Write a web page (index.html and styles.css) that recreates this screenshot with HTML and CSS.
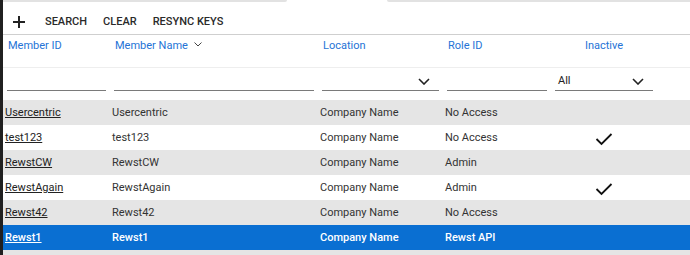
FILE: index.html
```html
<!DOCTYPE html>
<html lang="en">
<head>
    <meta charset="UTF-8">
    <title>Members</title>
    <link rel="stylesheet" href="styles.css">
</head>
<body>
    <div class="app">
        <div class="side"></div>
        <div class="main">
            <div class="tabs">
                <div class="tab-line left"></div>
                <div class="tab-gap"></div>
                <div class="tab-line right"></div>
            </div>

            <div class="toolbar">
                <button class="tool add" title="Add">
                    <svg width="14" height="14" viewBox="0 0 14 14"><path d="M7 1v12M1 7h12" stroke="#222" stroke-width="2" fill="none"/></svg>
                </button>
                <button class="tool">SEARCH</button>
                <button class="tool">CLEAR</button>
                <button class="tool">RESYNC KEYS</button>
            </div>

            <table class="grid">
                <colgroup>
                    <col style="width:107px">
                    <col style="width:208px">
                    <col style="width:125px">
                    <col style="width:108px">
                    <col style="width:106px">
                    <col>
                </colgroup>
                <thead>
                    <tr class="head">
                        <th>Member ID</th>
                        <th>Member Name
                            <svg class="sort" width="8" height="5" viewBox="0 0 8 5"><path d="M0.5 0.5l3.5 3.5 3.5-3.5" stroke="#444" stroke-width="1" fill="none"/></svg>
                        </th>
                        <th>Location</th>
                        <th>Role ID</th>
                        <th class="center">Inactive</th>
                        <th></th>
                    </tr>
                    <tr class="filters">
                        <td><div class="filter"></div></td>
                        <td><div class="filter"></div></td>
                        <td><div class="filter select"><span></span><svg width="12" height="7" viewBox="0 0 12 7"><path d="M1 1l5 5 5-5" stroke="#222" stroke-width="1.6" fill="none"/></svg></div></td>
                        <td><div class="filter"></div></td>
                        <td><div class="filter select"><span>All</span><svg width="12" height="7" viewBox="0 0 12 7"><path d="M1 1l5 5 5-5" stroke="#222" stroke-width="1.6" fill="none"/></svg></div></td>
                        <td></td>
                    </tr>
                </thead>
                <tbody>
                    <tr class="alt">
                        <td><a href="#">Usercentric</a></td>
                        <td>Usercentric</td>
                        <td>Company Name</td>
                        <td>No Access</td>
                        <td class="center"></td>
                        <td></td>
                    </tr>
                    <tr>
                        <td><a href="#">test123</a></td>
                        <td>test123</td>
                        <td>Company Name</td>
                        <td>No Access</td>
                        <td class="center"><svg class="check" width="18" height="14" viewBox="0 0 18 14"><path d="M1.5 7l5 5 10-10" stroke="#111" stroke-width="1.8" fill="none"/></svg></td>
                        <td></td>
                    </tr>
                    <tr class="alt">
                        <td><a href="#">RewstCW</a></td>
                        <td>RewstCW</td>
                        <td>Company Name</td>
                        <td>Admin</td>
                        <td class="center"></td>
                        <td></td>
                    </tr>
                    <tr>
                        <td><a href="#">RewstAgain</a></td>
                        <td>RewstAgain</td>
                        <td>Company Name</td>
                        <td>Admin</td>
                        <td class="center"><svg class="check" width="18" height="14" viewBox="0 0 18 14"><path d="M1.5 7l5 5 10-10" stroke="#111" stroke-width="1.8" fill="none"/></svg></td>
                        <td></td>
                    </tr>
                    <tr class="alt">
                        <td><a href="#">Rewst42</a></td>
                        <td>Rewst42</td>
                        <td>Company Name</td>
                        <td>No Access</td>
                        <td class="center"></td>
                        <td></td>
                    </tr>
                    <tr class="selected">
                        <td><a href="#">Rewst1</a></td>
                        <td>Rewst1</td>
                        <td>Company Name</td>
                        <td>Rewst API</td>
                        <td class="center"></td>
                        <td></td>
                    </tr>
                    <tr class="alt">
                        <td>&nbsp;</td>
                        <td></td>
                        <td></td>
                        <td></td>
                        <td></td>
                        <td></td>
                    </tr>
                </tbody>
            </table>
        </div>
    </div>
</body>
</html>
```

FILE: styles.css
```css
* {
    box-sizing: border-box;
}

html, body {
    margin: 0;
    padding: 0;
    height: 100%;
    overflow: hidden;
}

body {
    font-family: Roboto, "Liberation Sans", Arial, sans-serif;
    font-size: 11px;
    color: #333;
    background: #fff;
}

.app {
    display: flex;
    min-height: 100%;
}

.side {
    width: 3px;
    flex: none;
    background: #202020;
}

.main {
    flex: 1;
    min-width: 0;
}

/* tab strip at the very top */
.tabs {
    display: flex;
    height: 2px;
}

.tab-line {
    background: #e2e2e2;
}

.tab-line.left {
    width: 284px;
    border-bottom-right-radius: 2px;
}

.tab-gap {
    width: 100px;
}

.tab-line.right {
    flex: 1;
    border-bottom-left-radius: 2px;
}

.toolbar {
    display: flex;
    align-items: center;
    height: 33px;
    padding: 7px 0 0 9px;
    border-bottom: 1px solid #cfcfcf;
}

.tool {
    background: none;
    border: none;
    padding: 0;
    margin-right: 16px;
    font-family: inherit;
    font-size: 11px;
    font-weight: 500;
    color: #2a2a2a;
    cursor: pointer;
}

.tool.add {
    display: flex;
    margin-right: 19px;
    margin-top: 0;
}

.tool:last-child {
    margin-right: 0;
}

table.grid {
    width: 100%;
    border-collapse: collapse;
    table-layout: fixed;
}

.head th {
    height: 32px;
    padding: 4px 5px 0;
    vertical-align: top;
    text-align: left;
    font-weight: 400;
    color: #2573d6;
    white-space: nowrap;
    border-bottom: 1px solid #eeeeee;
}

.head th.center {
    text-align: center;
}

.sort {
    margin-left: 3px;
    vertical-align: 2px;
}

.filters td {
    height: 33px;
    padding: 0 4px 9px;
    vertical-align: bottom;
}

.filter {
    display: flex;
    align-items: center;
    justify-content: space-between;
    height: 20px;
    border-bottom: 1px solid #7a7a7a;
    padding: 1px 9px 1px 3px;
    color: #222;
}

.filter.select svg {
    margin-top: 1px;
}

tbody td {
    height: 25px;
    padding: 0 2px;
    vertical-align: middle;
    white-space: nowrap;
    color: #333;
}

tbody td.center {
    text-align: center;
}

tbody a {
    color: #222;
    text-decoration: underline;
}

tr.alt td {
    background: #e5e5e5;
}

tr.selected td {
    background: #0a6fd2;
    color: #fff;
    font-weight: 500;
}

tr.selected a {
    color: #fff;
}

.check {
    display: block;
    margin: 2px auto 0;
}
```
